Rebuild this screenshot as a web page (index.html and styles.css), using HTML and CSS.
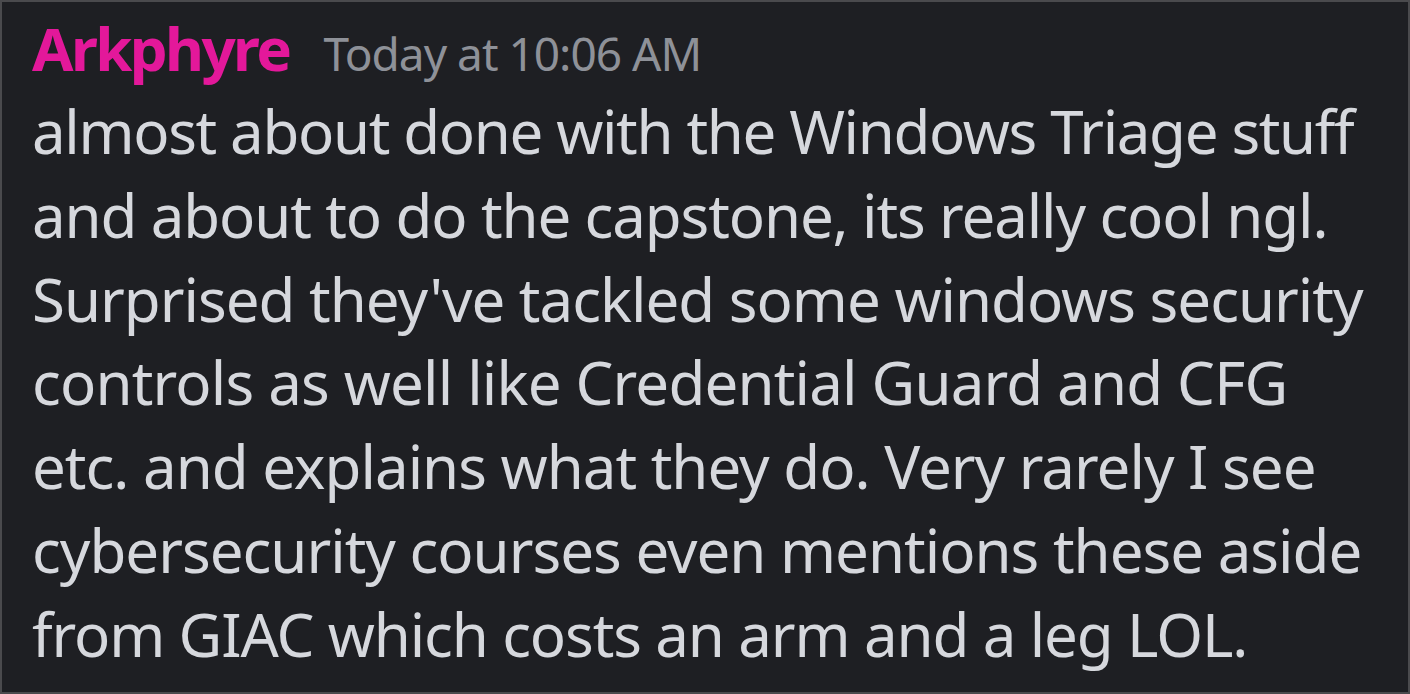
FILE: index.html
```html
<!DOCTYPE html>
<html>
<head>
<meta charset="utf-8">
<link rel="stylesheet" href="styles.css">
</head>
<body>
<div class="frame">
  <div class="message">
    <div class="header">
      <span class="username">Arkphyre</span>
      <span class="timestamp">Today at 10:06 AM</span>
    </div>
    <div class="content">
      <span class="line line-tight">almost about done with the Windows Triage stuff</span>
      <span class="line line-mid">and about to do the capstone, its really cool ngl.</span>
      <span class="line">Surprised they've tackled some windows security</span>
      <span class="line line-wide">controls as well like Credential Guard and CFG</span>
      <span class="line">etc. and explains what they do. Very rarely I see</span>
      <span class="line">cybersecurity courses even mentions these aside</span>
      <span class="line line-mid">from GIAC which costs an arm and a leg LOL.</span>
    </div>
  </div>
</div>
</body>
</html>
```
FILE: styles.css
```css
html, body {
  margin: 0;
  padding: 0;
  background: #1e1f23;
}
.frame {
  box-sizing: border-box;
  width: 1410px;
  height: 694px;
  border: 2px solid #4a4a4d;
  background: #1e1f23;
  overflow: hidden;
}
.message {
  padding: 4px 0 0 30px;
  font-family: "Noto Sans", sans-serif;
}
.header {
  display: flex;
  align-items: baseline;
  gap: 34px;
  line-height: 84px;
  height: 84px;
}
.username {
  font-size: 60px;
  font-weight: 700;
  letter-spacing: -2.6px;
  color: #e3189a;
}
.timestamp {
  font-size: 46px;
  letter-spacing: -1px;
  color: #8e9198;
}
.content {
  font-size: 60px;
  line-height: 83.8px;
  letter-spacing: -1px;
  color: #d6d8dd;
}
.line {
  display: block;
  white-space: nowrap;
}
.line-tight {
  letter-spacing: -1.35px;
}
.line-mid {
  letter-spacing: -1.12px;
}
.line-wide {
  letter-spacing: -0.82px;
}
```
